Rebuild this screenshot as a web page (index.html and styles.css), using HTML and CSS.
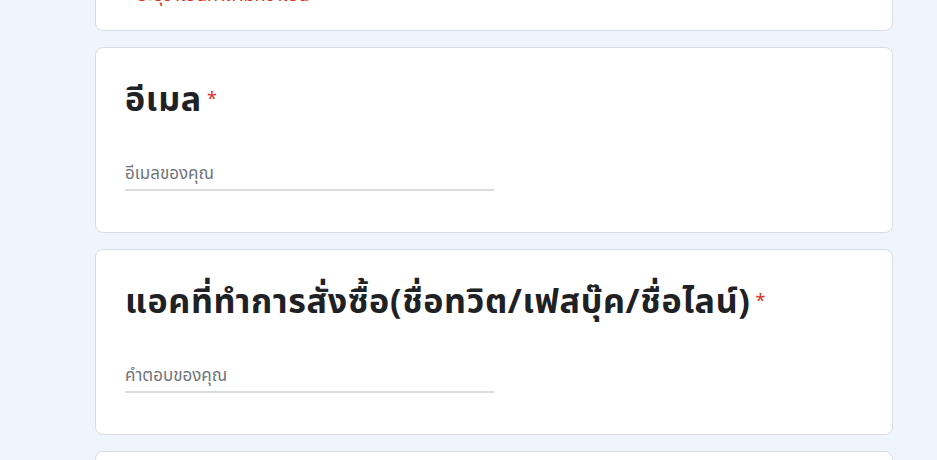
FILE: index.html
```
<!DOCTYPE html>
<html lang="th">
<head>
<meta charset="UTF-8" />
<meta name="viewport" content="width=device-width, initial-scale=1" />
<title>แบบฟอร์มสั่งซื้อ</title>
<link rel="stylesheet" href="styles.css">
</head>
<body>

<main class="form">
  <div class="card card-error">
    <div class="error">ระบุว่าเป็นคำถามที่จำเป็น</div>
  </div>

  <div class="card">
    <div class="question">อีเมล<span class="req">*</span></div>
    <div class="answer">อีเมลของคุณ</div>
  </div>

  <div class="card">
    <div class="question">แอคที่ทำการสั่งซื้อ(ชื่อทวิต/เฟสบุ๊ค/ชื่อไลน์)<span class="req">*</span></div>
    <div class="answer">คำตอบของคุณ</div>
  </div>

  <div class="card"></div>
</main>

</body>
</html>
```

FILE: styles.css
```
body { margin: 0; background: #eef5fd; font-family: "Noto Sans Thai", "Noto Sans", Arial, sans-serif; color: #202124; overflow: hidden; }
.form { width: 798px; margin: -120px 0 0 95px; display: flex; flex-direction: column; gap: 16px; }
.card { background: #fff; border: 1px solid #dadce0; border-radius: 8px; padding: 24px 29px; height: 186px; box-sizing: border-box; }
.card-error { height: 151px; display: flex; flex-direction: column; justify-content: flex-end; padding-bottom: 22px; }
.error { color: #d93025; font-size: 18px; line-height: 24px; padding-left: 13px; }
.question { font-size: 34px; font-weight: bold; line-height: 40px; padding-top: 9px; letter-spacing: 0.7px; }
.req { color: #d93025; font-size: 18px; font-weight: normal; vertical-align: top; margin-left: 5px; position: relative; top: -1px; }
.answer { width: 369px; margin-top: 41px; padding-bottom: 3px; border-bottom: 2px solid #dadce0; color: #70757a; font-size: 17px; line-height: 24px; }
```
